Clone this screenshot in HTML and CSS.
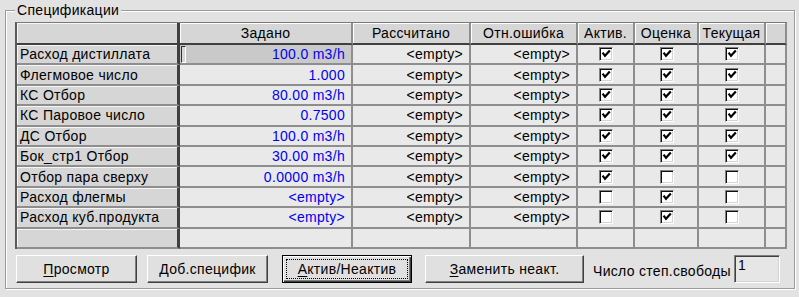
FILE: index.html
```html
<!DOCTYPE html>
<html lang="ru">
<head>
    <meta charset="UTF-8">
    <title>Спецификации</title>
    <link rel="stylesheet" href="styles.css">
</head>
<body>
    <div class="window">
        <fieldset class="group">
            <legend>Спецификации</legend>

            <div class="grid">
                <!-- header -->
                <div class="c h f"></div>
                <div class="c h">Задано</div>
                <div class="c h">Рассчитано</div>
                <div class="c h">Отн.ошибка</div>
                <div class="c h">Актив.</div>
                <div class="c h">Оценка</div>
                <div class="c h">Текущая</div>
                <div class="c h"></div>

                <div class="c f">Расход дистиллата</div>
                <div class="c v sel"><span class="caret"></span>100.0 m3/h</div>
                <div class="c">&lt;empty&gt;</div>
                <div class="c">&lt;empty&gt;</div>
                <div class="c m"><span class="cb on"></span></div>
                <div class="c m"><span class="cb on"></span></div>
                <div class="c m"><span class="cb on"></span></div>
                <div class="c"></div>

                <div class="c f">Флегмовое число</div>
                <div class="c v">1.000</div>
                <div class="c">&lt;empty&gt;</div>
                <div class="c">&lt;empty&gt;</div>
                <div class="c m"><span class="cb on"></span></div>
                <div class="c m"><span class="cb on"></span></div>
                <div class="c m"><span class="cb on"></span></div>
                <div class="c"></div>

                <div class="c f">КС Отбор</div>
                <div class="c v">80.00 m3/h</div>
                <div class="c">&lt;empty&gt;</div>
                <div class="c">&lt;empty&gt;</div>
                <div class="c m"><span class="cb on"></span></div>
                <div class="c m"><span class="cb on"></span></div>
                <div class="c m"><span class="cb on"></span></div>
                <div class="c"></div>

                <div class="c f">КС Паровое число</div>
                <div class="c v">0.7500</div>
                <div class="c">&lt;empty&gt;</div>
                <div class="c">&lt;empty&gt;</div>
                <div class="c m"><span class="cb on"></span></div>
                <div class="c m"><span class="cb on"></span></div>
                <div class="c m"><span class="cb on"></span></div>
                <div class="c"></div>

                <div class="c f">ДС Отбор</div>
                <div class="c v">100.0 m3/h</div>
                <div class="c">&lt;empty&gt;</div>
                <div class="c">&lt;empty&gt;</div>
                <div class="c m"><span class="cb on"></span></div>
                <div class="c m"><span class="cb on"></span></div>
                <div class="c m"><span class="cb on"></span></div>
                <div class="c"></div>

                <div class="c f">Бок_стр1 Отбор</div>
                <div class="c v">30.00 m3/h</div>
                <div class="c">&lt;empty&gt;</div>
                <div class="c">&lt;empty&gt;</div>
                <div class="c m"><span class="cb on"></span></div>
                <div class="c m"><span class="cb on"></span></div>
                <div class="c m"><span class="cb on"></span></div>
                <div class="c"></div>

                <div class="c f">Отбор пара сверху</div>
                <div class="c v">0.0000 m3/h</div>
                <div class="c">&lt;empty&gt;</div>
                <div class="c">&lt;empty&gt;</div>
                <div class="c m"><span class="cb on"></span></div>
                <div class="c m"><span class="cb"></span></div>
                <div class="c m"><span class="cb"></span></div>
                <div class="c"></div>

                <div class="c f">Расход флегмы</div>
                <div class="c v">&lt;empty&gt;</div>
                <div class="c">&lt;empty&gt;</div>
                <div class="c">&lt;empty&gt;</div>
                <div class="c m"><span class="cb"></span></div>
                <div class="c m"><span class="cb on"></span></div>
                <div class="c m"><span class="cb"></span></div>
                <div class="c"></div>

                <div class="c f">Расход куб.продукта</div>
                <div class="c v">&lt;empty&gt;</div>
                <div class="c">&lt;empty&gt;</div>
                <div class="c">&lt;empty&gt;</div>
                <div class="c m"><span class="cb"></span></div>
                <div class="c m"><span class="cb on"></span></div>
                <div class="c m"><span class="cb"></span></div>
                <div class="c"></div>

                <div class="c f"></div>
                <div class="c"></div>
                <div class="c"></div>
                <div class="c"></div>
                <div class="c"></div>
                <div class="c"></div>
                <div class="c"></div>
                <div class="c"></div>
            </div>

            <div class="buttons">
                <button class="btn b1"><u>П</u>росмотр</button>
                <button class="btn b2">Доб.специфик</button>
                <button class="btn b3 focus"><span class="focus-rect"><u>А</u>ктив/Неактив</span></button>
                <button class="btn b4"><u>З</u>аменить неакт.</button>
                <span class="label">Число степ.свободы</span>
                <span class="edit">1</span>
            </div>
        </fieldset>
    </div>
</body>
</html>
```

FILE: styles.css
```css
* {
    margin: 0;
    padding: 0;
    box-sizing: border-box;
}

body {
    background-color: #e2e2e2;
    font-family: "Liberation Sans", Arial, sans-serif;
    font-size: 14px;
    color: #000;
}

.window {
    width: 799px;
    height: 297px;
    padding: 2px 0 0 5px;
}

.group {
    width: 790px;
    height: 287px;
    border: 1px solid #9a9a9a;
    box-shadow: inset 1px 1px 0 #fff, 1px 1px 0 #fff;
    padding: 4px 7px 6px 9px;
}

.group legend {
    padding: 0 2px;
    line-height: 16px;
    background-color: #e2e2e2;
    letter-spacing: 0.3px;
}

/* table */
.grid {
    display: grid;
    grid-template-columns: 163px 173px 118px 107px 57px 64px 67px 21px;
    grid-template-rows: 22px repeat(10, 20.4px);
    border-left: 2px solid #5a5a5a;
    border-top: 1px solid #7a7a7a;
    letter-spacing: 0.3px;
}

.grid .c {
    background-color: #e9e9e9;
    border-right: 2px solid #8e8e8e;
    border-bottom: 2px solid #8e8e8e;
    padding: 0 6px;
    display: flex;
    align-items: center;
    justify-content: flex-end;
    white-space: nowrap;
    overflow: hidden;
}

.grid .h {
    background-color: #d6d6d6;
    justify-content: center;
    border-bottom-color: #404040;
    box-shadow: inset 1px 1px 0 #fff;
    padding: 0 2px;
}

.grid .f {
    background-color: #d6d6d6;
    justify-content: flex-start;
    padding-left: 3px;
    border-right: 3px solid #404040;
    box-shadow: inset 1px 1px 0 #f6f6f6;
}

.grid .v {
    color: #0000f0;
}

.grid .sel {
    background-color: #c9c9c9;
    justify-content: space-between;
    padding-left: 1px;
}

.caret {
    width: 5px;
    height: 17px;
    border: 1px solid #303030;
    border-right-color: #fff;
    border-bottom-color: #fff;
    background-color: #d6d6d6;
}

.grid .m {
    justify-content: center;
    padding: 0;
}

.cb {
    display: block;
    width: 14px;
    height: 14px;
    margin-left: 1px;
    background-color: #fff;
    border: 1px solid;
    border-color: #808080 #fff #fff #808080;
    box-shadow: inset 1px 1px 0 #101010, inset -1px -1px 0 #d4d4d4;
}

.cb.on {
    background-image: url("data:image/svg+xml,%3Csvg xmlns='http://www.w3.org/2000/svg' width='12' height='12'%3E%3Cpath d='M2.6 4.6 L5 7.8 L9.8 2.6' fill='none' stroke='%23000' stroke-width='2.2'/%3E%3C/svg%3E");
    background-repeat: no-repeat;
    background-position: 0 0;
}

/* buttons */
.buttons {
    display: flex;
    align-items: center;
    margin-top: 6px;
    margin-left: 1px;
}

.btn {
    height: 28px;
    background-color: #e0e0e0;
    font-family: "Liberation Sans", Arial, sans-serif;
    font-size: 14px;
    letter-spacing: 0.3px;
    border: 1px solid;
    border-color: #fff #404040 #404040 #fff;
    box-shadow: inset -1px -1px 0 #808080;
}

.btn u {
    text-decoration-thickness: 1px;
    text-underline-offset: 2px;
}

.b1 {
    width: 121px;
}

.b2 {
    width: 121px;
    margin-left: 10px;
}

.b3 {
    width: 130px;
    margin-left: 14px;
}

.b4 {
    width: 159px;
    margin-left: 13px;
}

.btn.focus {
    border: 1px solid #000;
    box-shadow: inset 1px 1px 0 #fff, inset -1px -1px 0 #404040, inset -2px -2px 0 #808080;
    padding: 3px;
}

.focus-rect {
    display: block;
    height: 100%;
    line-height: 18px;
    border: 1px dotted #000;
}

.label {
    margin-left: 9px;
    letter-spacing: 0.3px;
    padding-top: 4px;
}

.edit {
    width: 46px;
    height: 28px;
    margin-left: 3px;
    padding: 1px 3px;
    line-height: 16px;
    background-color: #e6e6e6;
    border: 1px solid;
    border-color: #808080 #fff #fff #808080;
    box-shadow: inset 1px 1px 0 #404040, inset -1px -1px 0 #d4d4d4;
}
```
